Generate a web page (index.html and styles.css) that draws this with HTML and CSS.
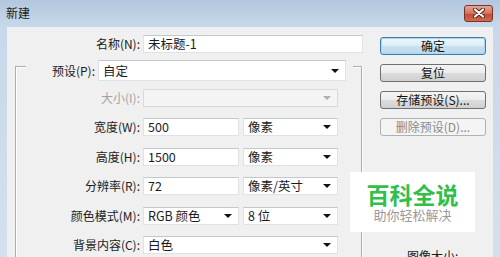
FILE: index.html
```html
<!DOCTYPE html>
<html>
<head>
    <!-- Dialog styles -->
    <link rel="stylesheet" href="styles.css">
</head>
<body>
    <div class="window">
        <!-- Title bar -->
        <div class="titlebar">
            <span class="title">新建</span>
            <div class="close">
                <svg width="14" height="10" viewBox="0 0 14 10">
                    <path d="M3 1.5 L11 8.5 M11 1.5 L3 8.5" stroke="#5a1d14" stroke-width="4" stroke-linecap="round"/>
                    <path d="M3 1.5 L11 8.5 M11 1.5 L3 8.5" stroke="#fff" stroke-width="2.2" stroke-linecap="round"/>
                </svg>
            </div>
        </div>

        <div class="client">
            <div class="form">
                <div class="name-row">
                    <label class="label name-label">名称(N):</label>
                    <div class="field name-input">未标题-1</div>
                </div>

                <!-- Preset group -->
                <div class="group">
                    <div class="preset-row">
                        <label class="label preset-label">预设(P):</label>
                        <div class="field select preset-select"><span>自定</span><i class="arrow"></i></div>
                    </div>

                    <div class="rows">
                        <div class="row">
                            <label class="label disabled">大小(I):</label>
                            <div class="field select wide off"><span></span><i class="arrow"></i></div>
                        </div>
                        <div class="row">
                            <label class="label">宽度(W):</label>
                            <div class="field num">500</div>
                            <div class="field select unit"><span>像素</span><i class="arrow"></i></div>
                        </div>
                        <div class="row">
                            <label class="label">高度(H):</label>
                            <div class="field num">1500</div>
                            <div class="field select unit"><span>像素</span><i class="arrow"></i></div>
                        </div>
                        <div class="row">
                            <label class="label">分辨率(R):</label>
                            <div class="field num">72</div>
                            <div class="field select unit"><span>像素/英寸</span><i class="arrow"></i></div>
                        </div>
                        <div class="row">
                            <label class="label">颜色模式(M):</label>
                            <div class="field select num"><span>RGB 颜色</span><i class="arrow"></i></div>
                            <div class="field select unit"><span>8 位</span><i class="arrow"></i></div>
                        </div>
                        <div class="row">
                            <label class="label">背景内容(C):</label>
                            <div class="field select wide"><span>白色</span><i class="arrow"></i></div>
                        </div>
                    </div>
                </div>
            </div>

            <!-- Buttons on the right -->
            <div class="side">
                <div class="btn default">确定</div>
                <div class="btn">复位</div>
                <div class="btn">存储预设(S)...</div>
                <div class="btn disabled-btn">删除预设(D)...</div>
                <div class="image-size">图像大小:</div>
            </div>
        </div>

        <!-- Watermark -->
        <div class="watermark">
            <div class="wm-title">百科全说</div>
            <div class="wm-sub">助你轻松解决</div>
        </div>
    </div>
</body>
</html>
```

FILE: styles.css
```css
body {
    margin: 0;
    font-family: "Noto Sans CJK SC", sans-serif;
    font-size: 12px;
    color: #1b1b1b;
}

.window {
    position: relative;
    width: 500px;
    height: 257px;
    overflow: hidden;
    display: flex;
    flex-direction: column;
    background: linear-gradient(#b2c7de, #c7d8ea 26px, #d4e0ed);
}

/* Title bar */
.titlebar {
    height: 27px;
    flex: none;
    display: flex;
    align-items: center;
    justify-content: space-between;
    padding: 0 7px 0 6px;
}
.title {
    font-size: 12px;
    line-height: 14px;
    color: #1a1a1a;
    margin-top: -2px;
}
.close {
    width: 27px;
    height: 15px;
    margin-top: -1px;
    border: 1px solid #7b3328;
    border-radius: 3px;
    background: linear-gradient(#e7a594, #d0725e 50%, #c14a32 51%, #d06b4f);
    display: flex;
    align-items: center;
    justify-content: center;
}

.client {
    flex: 1;
    margin: 0 7px;
    background: #f0f0f0;
    display: flex;
}

/* Left form */
.form {
    width: 363px;
    padding-top: 8px;
    display: flex;
    flex-direction: column;
}
.label {
    text-align: right;
    line-height: 18px;
    white-space: nowrap;
    flex: none;
}
.label.disabled {
    color: #a3a3a3;
}
.field {
    box-sizing: border-box;
    height: 18px;
    line-height: 16px;
    padding-left: 4px;
    background: #fff;
    border: 1px solid #dfe3e8;
    border-top-color: #c3c8ce;
    font-size: 12.5px;
    flex: none;
    white-space: nowrap;
}
.select {
    display: flex;
    align-items: center;
    justify-content: space-between;
    padding-right: 6px;
}
.arrow {
    width: 0;
    height: 0;
    border-left: 4px solid transparent;
    border-right: 4px solid transparent;
    border-top: 4px solid #111;
}
.off {
    background: #f4f4f4;
    border-color: #d9d9d9;
}
.off .arrow {
    border-top-color: #b0b0b0;
}

.name-row {
    display: flex;
    align-items: center;
    gap: 3px;
}
.name-label {
    width: 133px;
}
.name-input {
    width: 220px;
}

/* Group box */
.group {
    flex: 1;
    width: 347px;
    box-sizing: border-box;
    margin: 13px 0 0 8px;
    border: 1px solid #a9aeb4;
    border-bottom: none;
    box-shadow: inset 1px 1px #fff, 1px 0 #fff;
}
.preset-row {
    display: flex;
    align-items: center;
    gap: 3px;
    height: 21px;
    margin: -7px 8px 0 10px;
    padding-right: 6px;
    background: #f0f0f0;
}
.preset-label {
    width: 69px;
}
.preset-select {
    width: 248px;
    height: 21px;
}
.rows {
    display: flex;
    flex-direction: column;
    gap: 11.4px;
    margin-top: 8px;
}
.row {
    display: flex;
    align-items: center;
    gap: 3px;
}
.row .label {
    width: 124px;
}
.wide {
    width: 195px;
}
.num {
    width: 96px;
}
.unit {
    width: 95px;
    margin-left: 1px;
}

/* Right buttons */
.side {
    flex: 1;
    padding: 10px 0 0 10px;
    display: flex;
    flex-direction: column;
    gap: 9px;
}
.btn {
    box-sizing: border-box;
    width: 106px;
    height: 18px;
    line-height: 16px;
    text-align: center;
    border: 1px solid #707070;
    border-radius: 3px;
    background: linear-gradient(#f4f4f4, #ececec 50%, #dcdcdc 51%, #d0d0d0);
    color: #111;
}
.btn.default {
    border-color: #3c7fb1;
    background: linear-gradient(#eef7fc, #dcecf6 50%, #c9e1f0 51%, #bcd9ec);
    box-shadow: inset 0 0 0 1px #a6d6f1;
}
.btn.disabled-btn {
    border-color: #adb2b5;
    background: #f4f4f4;
    color: #8a8a8a;
}
.image-size {
    margin-top: 104px;
    padding-left: 27px;
    line-height: 14px;
}

/* Watermark over the dialog */
.watermark {
    position: absolute;
    left: 350px;
    top: 172px;
    width: 125px;
    height: 60px;
    background: #fff;
    text-align: center;
}
.wm-title {
    margin-top: 9px;
    font-size: 23px;
    line-height: 26px;
    font-weight: bold;
    color: #2fbf4a;
}
.wm-sub {
    font-size: 13px;
    line-height: 16px;
    color: #9a9a9a;
}
```
